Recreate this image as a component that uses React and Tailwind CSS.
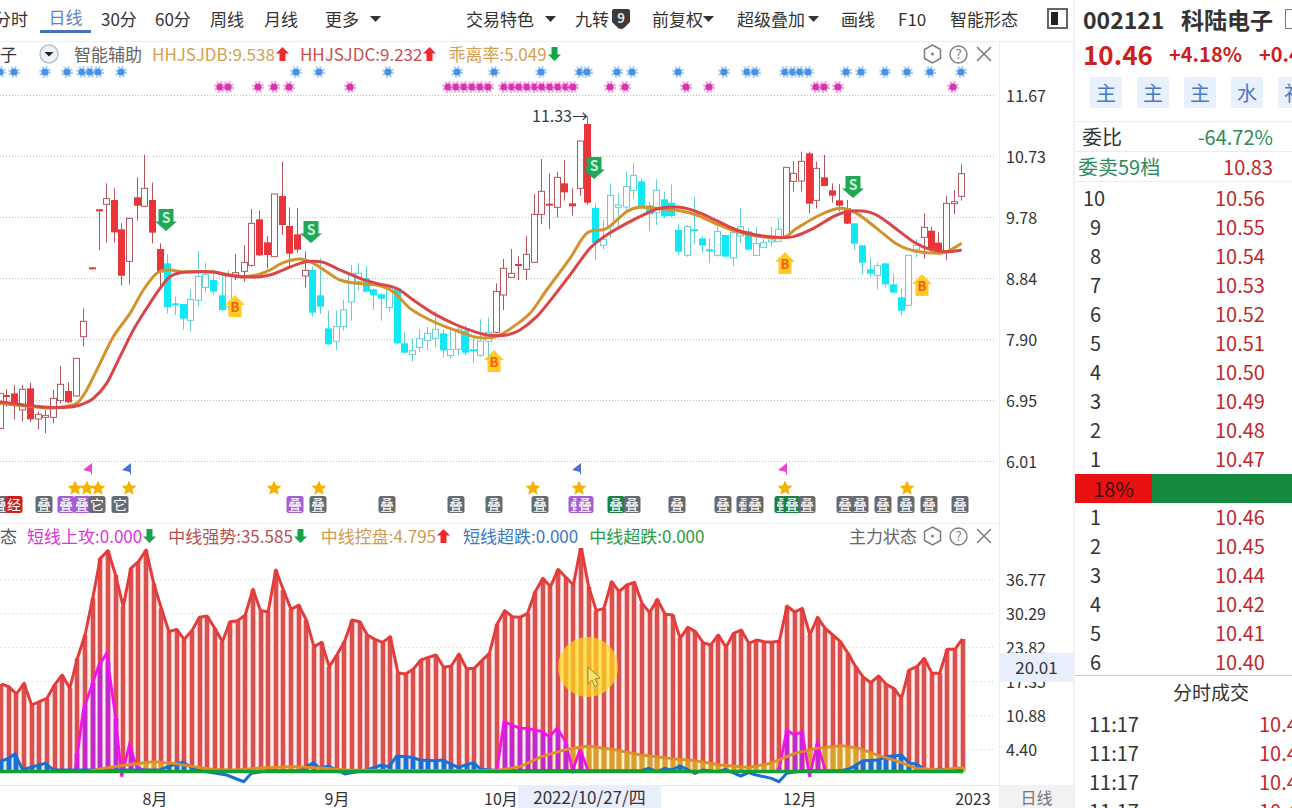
import React from 'react';

// candles: [x, wickTop, bodyTop, bodyBottom, wickBottom, kind] read off the chart, in 3x coords
// kind: r = filled red, h = hollow red, c = filled cyan, k = hollow cyan
const candlesA = [
  [0,880,880,985,985,'h'],[18,868,885,890,920,'r'],[43,855,880,918,958,'r'],[67,855,868,930,965,'h'],
  [91,848,865,958,965,'r'],[113,935,943,957,988,'h'],[136,930,946,951,1000,'h'],[160,870,895,952,970,'h'],
  [181,798,853,902,910,'h'],[205,848,873,907,910,'r'],[229,775,775,888,890,'h'],[250,625,664,710,740,'h'],
  [275,503,502,506,506,'r'],[296,328,328,331,450,'r'],[319,250,296,313,428,'h'],[343,265,300,397,428,'r'],
  [364,370,388,527,556,'r'],[388,355,355,484,553,'h'],[412,232,292,317,362,'r'],[433,165,265,319,319,'h'],
  [457,247,300,398,430,'r'],[481,430,447,517,565,'r'],[502,462,490,622,640,'c'],[526,590,610,613,645,'c'],
  [548,612,612,656,688,'c'],[571,568,598,661,695,'k'],[594,453,529,601,620,'k'],[616,488,523,562,578,'k'],
  [640,508,540,575,585,'c'],[665,522,586,630,632,'c'],[685,510,524,620,630,'k'],[706,462,518,525,540,'h'],
  [731,435,487,514,545,'h'],[754,327,370,496,500,'h'],[778,332,358,466,468,'r'],[800,408,427,465,505,'r'],
  [822,282,282,470,470,'h'],[846,186,288,375,405,'r'],[868,322,378,461,500,'r'],[892,324,403,449,458,'r'],
  [916,454,511,528,562,'h'],[937,500,510,638,650,'c'],[960,475,586,620,642,'c'],[985,632,685,733,735,'c'],
  [1007,632,680,724,750,'k'],
];
const candlesB = [
  [10,600,630,680,692,'k'],[32,495,520,606,662,'k'],[55,490,520,545,570,'k'],[79,498,535,575,575,'c'],
  [100,565,568,586,630,'c'],[124,580,583,596,662,'c'],[147,560,562,622,635,'k'],[170,565,565,730,732,'c'],
  [193,695,730,758,760,'c'],[215,715,752,763,785,'k'],[238,688,716,742,757,'k'],[262,680,700,721,750,'k'],
  [284,632,688,715,740,'k'],[308,688,700,751,772,'c'],[331,688,748,767,775,'k'],[353,672,688,748,765,'k'],
  [375,675,692,758,765,'c'],[400,712,748,752,788,'c'],[421,658,723,766,770,'k'],[445,652,697,724,770,'k'],
  [468,550,574,697,700,'h'],[490,477,505,585,630,'h'],[513,447,520,532,532,'h'],[535,468,492,496,540,'r'],
  [559,408,463,508,540,'h'],[583,282,343,487,487,'h'],[604,177,274,343,372,'h'],[627,220,311,316,387,'r'],
  [652,215,232,322,352,'h'],[673,180,250,277,302,'r'],[697,265,310,319,347,'r'],[719,123,123,265,288,'h'],
  [742,50,72,308,314,'r'],[766,308,324,429,480,'c'],[788,360,418,436,448,'k'],[811,250,286,378,412,'k'],
  [835,280,315,322,378,'k'],[857,215,260,321,333,'k'],[880,190,226,271,295,'k'],[903,235,244,318,325,'c'],
  [926,305,316,343,392,'c'],[949,238,271,338,375,'k'],[971,275,298,349,355,'c'],[993,253,308,348,352,'c'],
  [1015,373,390,455,465,'c'],
];
const candlesC = [
  [20,375,380,466,470,'k'],[42,292,388,394,432,'c'],[67,408,415,436,458,'c'],[88,415,448,451,490,'c'],
  [112,380,394,466,470,'k'],[134,405,405,470,470,'c'],[158,395,398,474,498,'k'],[180,325,380,408,430,'k'],
  [203,385,394,449,452,'c'],[227,380,431,466,466,'k'],[250,418,428,442,442,'k'],[272,380,420,426,440,'k'],
  [295,355,388,424,425,'k'],[319,202,202,413,415,'h'],[340,183,220,244,275,'h'],[363,155,184,243,275,'h'],
  [387,155,160,311,340,'r'],[409,185,205,301,325,'h'],[432,165,232,258,258,'r'],[455,250,271,287,308,'r'],
  [478,252,301,317,334,'r'],[501,300,325,371,372,'r'],[523,370,370,431,450,'c'],[547,436,436,488,523,'c'],
  [571,473,508,521,532,'c'],[592,488,497,526,568,'k'],[616,488,490,553,562,'c'],[639,520,553,578,578,'c'],
  [662,565,592,632,647,'c'],[685,465,466,616,618,'k'],[708,418,436,450,472,'k'],[731,340,382,412,476,'h'],
  [754,380,392,450,460,'r'],[775,397,428,452,460,'r'],[798,288,310,452,480,'h'],[821,270,305,311,342,'h'],
  [844,193,221,289,302,'h'],
];

const toImg = (off) => ([x, a, b, c, d, kind]) => ({
  x: Math.round(off + x / 3),
  wt: 100 + a / 3, bt: 100 + b / 3, bb: 100 + c / 3, wb: 100 + d / 3, kind,
});
const candles = [...candlesA.map(toImg(0)), ...candlesB.map(toImg(340)), ...candlesC.map(toImg(680))];

const ma = (off, pts) => pts.map(([x, y]) => [off + x / 3, 100 + y / 3]);
const maRed = [
  ...ma(0, [[0,905],[50,912],[100,918],[150,922],[200,922],[240,915],[280,895],[320,850],[360,770],[400,690],[440,625],[480,565],[510,530],[540,518],[590,515],[640,516],[680,525],[720,530],[780,530],[820,522],[860,505],[900,490],[930,484],[970,487]]),
  ...ma(340, [[0,510],[60,535],[110,550],[170,565],[220,600],[280,640],[350,675],[410,697],[450,706],[500,705],[540,690],[590,650],[640,590],[690,525],[750,445],[800,405],[860,370],[920,340],[960,325]]),
  ...ma(680, [[0,322],[50,335],[110,362],[170,390],[230,405],[290,412],[340,410],[400,385],[460,350],[500,335],[550,333],[590,345],[640,380],[700,425],[750,448],[800,455],[845,450]]),
];
const maOrange = [
  ...ma(0, [[0,910],[50,915],[100,920],[150,925],[190,920],[230,910],[260,870],[300,790],[340,710],[390,640],[430,570],[470,520],[510,510],[540,515],[590,515],[640,516],[680,523],[720,530],[770,525],[810,510],[850,488],[900,477],[940,490],[980,515]]),
  ...ma(340, [[0,540],[50,550],[110,555],[160,575],[210,625],[270,660],[330,685],[400,710],[440,714],[480,705],[520,680],[570,640],[620,570],[690,475],[740,400],[800,385],[860,335],[900,322],[950,325]]),
  ...ma(680, [[0,332],[50,345],[110,372],[170,395],[230,408],[310,412],[350,385],[420,345],[480,325],[530,340],[590,385],[650,432],[700,452],[780,460],[810,450],[845,430]]),
];

const smooth = (pts) => {
  let d = `M${pts[0][0]} ${pts[0][1]}`;
  for (let i = 0; i < pts.length - 1; i++) {
    const p0 = pts[i - 1] || pts[i], p1 = pts[i], p2 = pts[i + 1], p3 = pts[i + 2] || p2;
    d += ` C${p1[0] + (p2[0] - p0[0]) / 6} ${p1[1] + (p2[1] - p0[1]) / 6} ${p2[0] - (p3[0] - p1[0]) / 6} ${p2[1] - (p3[1] - p1[1]) / 6} ${p2[0]} ${p2[1]}`;
  }
  return d;
};

const blueDots = [0,14,45,67,82,90,98,121,296,319,388,457,494,541,580,587,617,632,678,724,747,755,785,793,800,808,846,861,885,907,930,961];
const pinkDots = [220,228,258,274,289,350,448,456,464,472,480,488,504,512,519,527,535,542,550,558,566,573,610,625,686,709,816,824,838,953];
const stars = [75,87,98,129,274,319,533,579,785,907];
const badges = [
  [0,'g','叠'],[14,'r','经'],[44,'g','叠'],[66,'p','叠'],[82,'p','叠'],[97,'g','它'],[120,'g','它'],[295,'p','叠'],[318,'g','叠'],
  [387,'g','叠'],[456,'g','叠'],[494,'g','叠'],[540,'g','叠'],[577,'p','叠'],[585,'p','叠'],[616,'e','叠'],[632,'g','叠'],
  [677,'g','叠'],[723,'g','叠'],[745,'g','叠'],[755,'g','叠'],[783,'e','叠'],[792,'e','叠'],[807,'g','叠'],[845,'g','叠'],
  [860,'g','叠'],[883,'g','叠'],[906,'g','叠'],[929,'g','叠'],[960,'g','叠'],
];
const badgeColor = { g: '#666b70', r: '#cc1f1f', p: '#a55fd4', e: '#1a7f45' };

const Flower = ({ x, y, color, halo }) => (
  <g>
    <circle cx={x} cy={y} r="4.6" fill="none" stroke={halo} strokeWidth="2.8" strokeDasharray="2 1.6" />
    <circle cx={x} cy={y} r="3.6" fill={color} />
  </g>
);

const Star = ({ x, y }) => (
  <polygon
    transform={`translate(${x} ${y})`}
    points="0,-7.5 2.2,-2.4 7.5,-2 3.4,1.4 4.8,6.8 0,3.9 -4.8,6.8 -3.4,1.4 -7.5,-2 -2.2,-2.4"
    fill="#f5b000"
  />
);

const SellMark = ({ x, y }) => (
  <g transform={`translate(${x} ${y})`}>
    <polygon points="-7.5,-11 7.5,-11 7.5,1.5 11,1.5 0,11 -11,1.5 -7.5,1.5" fill="#1fa855" />
    <text x="0" y="3" textAnchor="middle" fontSize="14" fontWeight="700" fill="#c8f0d8">S</text>
  </g>
);

const BuyMark = ({ x, y }) => (
  <g transform={`translate(${x} ${y})`}>
    <polygon points="0,-11 10,-1 6.5,-1 6.5,11 -6.5,11 -6.5,-1 -10,-1" fill="#ffcb25" />
    <text x="0" y="6" textAnchor="middle" fontSize="13" fontWeight="700" fill="#f0600f">B</text>
  </g>
);

const Flag = ({ x, color }) => (
  <polygon transform={`translate(${x} 469)`} points="4,-6 4,5.5 3,5.5 3,3 -5,1" fill={color} />
);

function MainChart() {
  return (
    <svg width="999" height="457" viewBox="0 66 999 457" className="block">
      {[95, 156, 217, 278, 339, 400, 461].map((y) => (
        <line key={y} x1="0" x2="994" y1={y + 0.5} y2={y + 0.5} stroke="#bdbdbd" strokeDasharray="1 2" />
      ))}
      {blueDots.map((x) => <Flower key={x} x={x} y={72} color="#4a90e2" halo="#a9d0f5" />)}
      {pinkDots.map((x) => <Flower key={x} x={x} y={87} color="#d635b0" halo="#f5a0e0" />)}

      {candles.map((c, i) => {
        const up = c.kind === 'r' || c.kind === 'h';
        const solid = c.kind === 'r' || c.kind === 'c';
        const fill = c.kind === 'r' ? '#e93539' : c.kind === 'c' ? '#12e8f4' : '#fff';
        const edge = up ? '#b4565c' : '#62cfd4';
        const h = Math.max(c.bb - c.bt, 2);
        return (
          <g key={i}>
            <line x1={c.x + 0.5} x2={c.x + 0.5} y1={c.wt} y2={c.wb} stroke={edge} />
            {solid
              ? <rect x={c.x - 3} y={c.bt} width="7" height={h} fill={fill} />
              : <rect x={c.x - 2.5} y={c.bt} width="6" height={h} fill={fill} stroke={edge} />}
          </g>
        );
      })}

      <path d={smooth(maOrange)} fill="none" stroke="#d2922c" strokeWidth="3" />
      <path d={smooth(maRed)} fill="none" stroke="#da4647" strokeWidth="3" />

      <text x="532" y="122" fontSize="16" fill="#2f3d4a">11.33→</text>

      <SellMark x={166} y={220} />
      <SellMark x={311} y={232} />
      <SellMark x={594} y={168} />
      <SellMark x={853} y={187} />
      <BuyMark x={235} y={306} />
      <BuyMark x={494} y={361} />
      <BuyMark x={785} y={263} />
      <BuyMark x={922} y={285} />

      <Flag x={88} color="#ee40d8" />
      <Flag x={127} color="#4a72d0" />
      <Flag x={577} color="#4a72d0" />
      <Flag x={783} color="#ee40d8" />
      {stars.map((x) => <Star key={x} x={x} y={488} />)}
      {badges.map(([x, c, t], i) => (
        <g key={i}>
          <rect x={x - 8.5} y="496" width="17" height="17" rx="2.5" fill={badgeColor[c]} />
          <text x={x} y="509.5" textAnchor="middle" fontSize="14" fill="#fff">{t}</text>
        </g>
      ))}
    </svg>
  );
}

// sub chart values: y of the red line at every bar, left to right
const redA = [432,440,462,430,495,485,475,435,405,445,355,285,175,55,32,105,200,85,65,30,130,205,275,268,298,272,232,228,265,305,245,242,225,148,212,215,90,150,208,195,240,320,307,380,345,305,240,245,285,298,307,290,398,402,388,360,352,345,382,378,342,386,385,362,340,252,212,230,232];
const redB = [220,155,115,140,88,112,135,18,140,212,205,125,155,135,127,190,218,178,222,225,295,262,275,308,315,285,322,280,270,310,300,305,307,303,198,216,205,285,232,265,285,305,340,380,412,428,408,433,445,475,390,380,355,400,400,328,328,297];
const redVals = [...redA, ...redB];
const barX = (i) => 962.5 - 7.63 * (redVals.length - 1 - i);
const barY = (v) => 540 + v / 3;
const redPts = redVals.map((v, i) => [barX(i), barY(v)]);
const BASE = 771.5;

const a = (pts) => pts.map(([x, y]) => [x / 3, 540 + y / 3]);
const b = (pts) => pts.map(([x, y]) => [520 + x / 2.8, 540 + y / 3]);

const magentaParts = [
  a([[225,695],[250,510],[295,380],[320,340],[345,520],[365,710],[388,615],[410,680],[430,690],[450,695]]),
  [...a([[1490,695],[1512,545]]), ...b([[0,565],[20,565],[62,575],[82,590],[104,565],[125,600],[148,690],[168,628],[190,690]])],
  b([[725,690],[747,570],[768,585],[790,575],[811,710],[832,610],[855,690]]),
];
const orangePts = [
  ...a([[270,692],[330,682],[400,672],[460,665],[520,670],[580,680],[640,688],[700,690],[780,684],[880,680],[960,684],[1040,690],[1200,692],[1440,692],[1500,690]]),
  ...b([[0,680],[60,650],[130,628],[190,618],[260,628],[340,645],[420,655],[490,662],[560,675],[640,682],[700,670],[770,640],[830,625],[900,617],[950,625],[1000,645],[1060,665],[1110,685],[1180,690],[1240,682]]),
];
const bluePts = [
  ...a([[0,665],[25,655],[45,642],[68,690],[91,682],[136,670],[160,690],[480,690],[502,680],[548,667],[590,690],[680,705],[731,725],[754,700],[800,692],[900,692],[940,668],[960,685],[985,678],[1035,702],[1100,690],[1144,675],[1167,680],[1190,648],[1236,652],[1259,660],[1305,662],[1328,660],[1374,682],[1420,668],[1443,688],[1500,692]]),
  ...b([[340,692],[360,685],[385,695],[405,685],[425,690],[448,678],[490,700],[512,690],[554,695],[575,688],[618,708],[640,698],[661,705],[704,715],[725,725],[747,700],[790,692],[900,692],[925,685],[961,662],[1004,660],[1025,650],[1068,645],[1090,670],[1111,672],[1132,690],[1175,688],[1240,692]]),
];

const valueAt = (pts, x) => {
  for (let i = 0; i < pts.length - 1; i++) {
    if (x >= pts[i][0] && x <= pts[i + 1][0]) {
      const t = (x - pts[i][0]) / (pts[i + 1][0] - pts[i][0] || 1);
      return pts[i][1] + t * (pts[i + 1][1] - pts[i][1]);
    }
  }
  return BASE;
};
const line = (pts) => pts.map((p) => p.join(',')).join(' ');
const area = (pts) => `${pts[0][0]},${BASE} ${line(pts)} ${pts[pts.length - 1][0]},${BASE}`;

function SubChart() {
  return (
    <svg width="999" height="260" viewBox="0 548 999 260" className="block">
      <polygon points={area(redPts)} fill="#feefef" />
      <polygon points={area(orangePts)} fill="#fdf5c4" />
      <polygon points={area(bluePts.filter((p) => p[1] < BASE + 1))} fill="#d4f4ff" />

      {[579.5, 613.5, 647.5, 681.5, 715.5, 749.5].map((y) => (
        <line key={y} x1="0" x2="994" y1={y} y2={y} stroke="#d8d8d8" strokeDasharray="1 3" />
      ))}

      {redPts.map(([x, y], i) => {
        const rx = Math.round(x) - 2.3;
        const oy = valueAt(orangePts, x);
        const by = valueAt(bluePts, x);
        let my = BASE;
        magentaParts.forEach((p) => { my = Math.min(my, valueAt(p, x)); });
        return (
          <g key={i}>
            <rect x={rx} y={y} width="4.6" height={BASE - y} fill="#d9504f" />
            {oy < BASE - 1 && <rect x={rx} y={oy} width="4.6" height={BASE - oy} fill="#d8a028" />}
            {by < BASE - 1 && <rect x={rx} y={by} width="4.6" height={BASE - by} fill="#1a70d8" />}
            {my < BASE - 1 && <rect x={rx} y={my} width="4.6" height={BASE - my} fill="#c028d0" />}
          </g>
        );
      })}

      <polyline points={line(redPts)} fill="none" stroke="#e63b3b" strokeWidth="3" strokeLinejoin="round" />
      {magentaParts.map((p, i) => (
        <polyline key={i} points={line(p)} fill="none" stroke="#f510f0" strokeWidth="2.8" />
      ))}
      <polyline points={line(bluePts)} fill="none" stroke="#1a6fd0" strokeWidth="3" />
      <polyline points={line(orangePts)} fill="none" stroke="#e08c28" strokeWidth="2.8" />
      <line x1="0" x2="963" y1={BASE} y2={BASE} stroke="#10a035" strokeWidth="3.5" />

      <circle cx="588" cy="667" r="30" fill="#ffd91e" fillOpacity="0.72" />
      <polygon points="588,667 588,684 592,680 595,687 598,685 595,679 600,678" fill="#f6e468" stroke="#8f8a45" />

      <line x1="0" x2="999" y1="785.5" y2="785.5" stroke="#e8e8e8" />
      {[[155, '8月'], [337, '9月'], [501, '10月'], [800, '12月'], [973, '2023']].map(([x, t]) => (
        <text key={t} x={x} y="805" textAnchor="middle" fontSize="16" fill="#333">{t}</text>
      ))}
    </svg>
  );
}

const Caret = ({ className = '' }) => (
  <svg width="11" height="6" viewBox="0 0 11 6" className={className}>
    <polygon points="0,0 11,0 5.5,6" fill="#333" />
  </svg>
);

const Arrow = ({ up, className = '' }) => (
  <svg width="13" height="14" viewBox="0 0 13 14" className={className}>
    {up
      ? <polygon points="6.5,0 13,6.5 9.5,6.5 9.5,14 3.5,14 3.5,6.5 0,6.5" fill="#ee2a2a" />
      : <polygon points="6.5,14 13,7.5 9.5,7.5 9.5,0 3.5,0 3.5,7.5 0,7.5" fill="#16a34a" />}
  </svg>
);

const PanelIcons = () => (
  <div className="flex items-center gap-[7px] text-[#7d7d7d]">
    <svg width="19" height="20" viewBox="0 0 19 20" fill="none" stroke="currentColor" strokeWidth="1.5">
      <polygon points="9.5,1 17.5,5.5 17.5,14.5 9.5,19 1.5,14.5 1.5,5.5" />
      <circle cx="9.5" cy="10" r="1.5" fill="currentColor" stroke="none" />
    </svg>
    <svg width="19" height="19" viewBox="0 0 19 19" fill="none" stroke="currentColor" strokeWidth="1.4">
      <circle cx="9.5" cy="9.5" r="8.5" />
      <text x="9.5" y="14" textAnchor="middle" fontSize="13" fill="currentColor" stroke="none">?</text>
    </svg>
    <svg width="16" height="16" viewBox="0 0 16 16" stroke="currentColor" strokeWidth="1.6" className="ml-[1px]">
      <line x1="1" y1="1" x2="15" y2="15" />
      <line x1="15" y1="1" x2="1" y2="15" />
    </svg>
  </div>
);

const axisMain = ['11.67', '10.73', '9.78', '8.84', '7.90', '6.95', '6.01'];
const axisSub = ['36.77', '30.29', '23.82', '17.35', '10.88', '4.40'];
const asks = [['10','10.56'],['9','10.55'],['8','10.54'],['7','10.53'],['6','10.52'],['5','10.51'],['4','10.50'],['3','10.49'],['2','10.48'],['1','10.47']];
const bids = [['1','10.46'],['2','10.45'],['3','10.44'],['4','10.42'],['5','10.41'],['6','10.40']];

const QuoteRow = ({ n, price }) => (
  <div className="flex h-[29px] items-center">
    <span className={n.length > 1 ? 'w-[140px] shrink-0 pl-[8px] text-[#333]' : 'w-[140px] shrink-0 pl-[15px] text-[#333]'}>{n}</span>
    <span className="text-[#c0282d]">{price}</span>
  </div>
);

export default function App() {
  return (
    <div className="flex h-[808px] w-[1292px] overflow-hidden whitespace-nowrap bg-white text-[17px] text-[#333] [font-family:'Noto_Sans_CJK_SC','Noto_Sans',sans-serif]">
      <div className="flex w-[1073px] shrink-0 flex-col">
        {/* top tabs */}
        <div className="flex h-[42px] shrink-0 items-center border-b border-[#eeeeee] pb-[4px]">
          <span className="-ml-[6px] w-[46px]">分时</span>
          <span className="flex h-[33px] w-[51px] items-center justify-center self-start border-b-[3px] border-[#4a72b8] pt-[3px] text-[#5a86c8]">日线</span>
          <span className="ml-[10px] w-[54px]">30分</span>
          <span className="w-[55px]">60分</span>
          <span className="w-[54px]">周线</span>
          <span className="w-[61px]">月线</span>
          <span className="w-[45px]">更多</span>
          <Caret className="mr-[85px]" />
          <span className="w-[79px]">交易特色</span>
          <Caret className="mr-[19px]" />
          <span className="w-[36px]">九转</span>
          <svg width="20" height="22" viewBox="0 0 20 22" className="mr-[21px]">
            <path d="M1 3 Q1 1 3 1 H17 Q19 1 19 3 V14 L13 20 Q10 22 7 20 L1 14 Z" fill="#3a3a3a" />
            <text x="10" y="15" textAnchor="middle" fontSize="13" fontWeight="700" fill="#e5e5e5">9</text>
          </svg>
          <span className="w-[51px]">前复权</span>
          <Caret className="mr-[23px]" />
          <span className="w-[71px]">超级叠加</span>
          <Caret className="mr-[22px]" />
          <span className="w-[57px]">画线</span>
          <span className="w-[52px]">F10</span>
          <span className="w-[97px]">智能形态</span>
          <span className="flex h-[21px] w-[21px] items-center border-2 border-[#666] pl-[2px]">
            <span className="h-[13px] w-[7px] bg-[#222]" />
          </span>
        </div>

        <div className="flex flex-1">
          <div className="flex w-[999px] shrink-0 flex-col">
            {/* main panel */}
            <div className="flex h-[24px] shrink-0 items-center pr-[7px]">
              <span className="w-[39px]">子</span>
              <svg width="20" height="20" viewBox="0 0 20 20" className="mr-[15px]">
                <circle cx="10" cy="10" r="9" fill="#eef2f7" stroke="#b8c2cc" strokeWidth="1.5" />
                <polygon points="5.5,8 14.5,8 10,12.5" fill="#222" />
              </svg>
              <span className="w-[78px] text-[#666]">智能辅助</span>
              <span className="text-[#d4a050]">HHJSJDB:9.538</span>
              <Arrow up className="ml-[1px] mr-[11px]" />
              <span className="text-[#c85050]">HHJSJDC:9.232</span>
              <Arrow up className="ml-[1px] mr-[12px]" />
              <span className="text-[#d4a050]">乖离率:5.049</span>
              <Arrow className="ml-[1px]" />
              <div className="ml-auto"><PanelIcons /></div>
            </div>
            <MainChart />

            {/* sub panel */}
            <div className="flex h-[25px] shrink-0 items-center border-t border-[#eeeeee] pr-[7px]">
              <span className="w-[27px] text-[#555]">态</span>
              <span className="text-[#d933d9]">短线上攻:0.000</span>
              <Arrow className="ml-[1px] mr-[12px]" />
              <span className="text-[#b75050]">中线强势:35.585</span>
              <Arrow className="ml-[1px] mr-[14px]" />
              <span className="text-[#d09a50]">中线控盘:4.795</span>
              <Arrow up className="ml-[1px] mr-[13px]" />
              <span className="mr-[11px] text-[#3a78c0]">短线超跌:0.000</span>
              <span className="text-[#2a9a40]">中线超跌:0.000</span>
              <span className="ml-auto mr-[6px] text-[#666]">主力状态</span>
              <PanelIcons />
            </div>
            <div className="relative">
              <SubChart />
              <div className="absolute bottom-0 left-[518px] flex h-[23px] w-[143px] items-center justify-center bg-[#e8eefb] text-[17px]">2022/10/27/四</div>
            </div>
          </div>

          {/* price axis */}
          <div className="flex flex-1 flex-col border-l border-[#eeeeee] text-[16px]">
            <div className="flex h-[481px] shrink-0 flex-col pl-[6px] pt-[22px]">
              {axisMain.map((t) => <div key={t} className="flex h-[61px] shrink-0 items-center">{t}</div>)}
            </div>
            <div className="relative flex flex-1 flex-col">
              <div className="flex flex-col pl-[6px] pt-[39px]">
                {axisSub.map((t) => <div key={t} className="flex h-[34px] shrink-0 items-center">{t}</div>)}
              </div>
              <div className="absolute left-0 top-[130px] flex h-[29px] w-full items-center justify-center bg-[#e8eefb] pb-[2px] text-[17px]">20.01</div>
              <div className="absolute bottom-0 left-0 flex h-[23px] w-full items-center justify-center bg-[#f2f2f4] text-[#777]">日线</div>
            </div>
          </div>
        </div>
      </div>

      {/* quote panel */}
      <div className="flex min-w-0 flex-1 flex-col overflow-hidden border-l-2 border-[#f0f0f4] text-[20px]">
        <div className="flex h-[38px] shrink-0 items-center pl-[8px] text-[23px] font-bold">
          <span className="w-[98px] shrink-0">002121</span>
          <span className="shrink-0">科陆电子</span>
          <span className="ml-[12px] h-[20px] w-[16px] shrink-0 border border-[#777]" />
        </div>
        <div className="flex h-[31px] shrink-0 items-center pl-[8px] font-bold text-[#d01f1f]">
          <span className="w-[86px] shrink-0 text-[26px]">10.46</span>
          <span className="w-[90px] shrink-0 text-[20px]">+4.18%</span>
          <span className="shrink-0 text-[20px]">+0.42</span>
        </div>
        <div className="mt-[8px] flex shrink-0 gap-[15px] pl-[15px]">
          {['主', '主', '主', '水', '补'].map((t, i) => (
            <span key={i} className="flex h-[31px] w-[32px] shrink-0 items-center justify-center rounded-[2px] bg-[#e8f0fb] text-[#4a78c8]">{t}</span>
          ))}
        </div>
        <div className="mt-[13px] flex h-[31px] shrink-0 items-center justify-between border-y border-[#ececec] pl-[7px] pr-[19px]">
          <span>委比</span>
          <span className="text-[#2e8b57]">-64.72%</span>
        </div>
        <div className="flex h-[30px] shrink-0 items-center justify-between border-b border-[#ececec] pl-[3px] pr-[19px] text-[#2e8b57]">
          <span>委卖59档</span>
          <span className="text-[#c0282d]">10.83</span>
        </div>
        <div className="shrink-0 pb-[1px] pt-[1px]">
          {asks.map(([n, p]) => <QuoteRow key={n} n={n} price={p} />)}
        </div>
        <div className="flex h-[29px] shrink-0 bg-[#168a3e]">
          <span className="flex w-[77px] shrink-0 items-center justify-center bg-[#e81010] text-[#3a1010]">18%</span>
        </div>
        <div className="-mt-[1px] h-[173px] shrink-0">
          {bids.map(([n, p]) => <QuoteRow key={n} n={n} price={p} />)}
        </div>
        <div className="flex h-[34px] shrink-0 items-center border-t border-[#cccccc] pl-[98px] text-[19px]">分时成交</div>
        {['10.46', '10.46', '10.46', '10.46'].map((p, i) => (
          <div key={i} className="flex h-[29px] shrink-0 items-center pl-[14px]">
            <span className="w-[170px] shrink-0">11:17</span>
            <span className="text-[#c0282d]">{p}</span>
          </div>
        ))}
      </div>
    </div>
  );
}
